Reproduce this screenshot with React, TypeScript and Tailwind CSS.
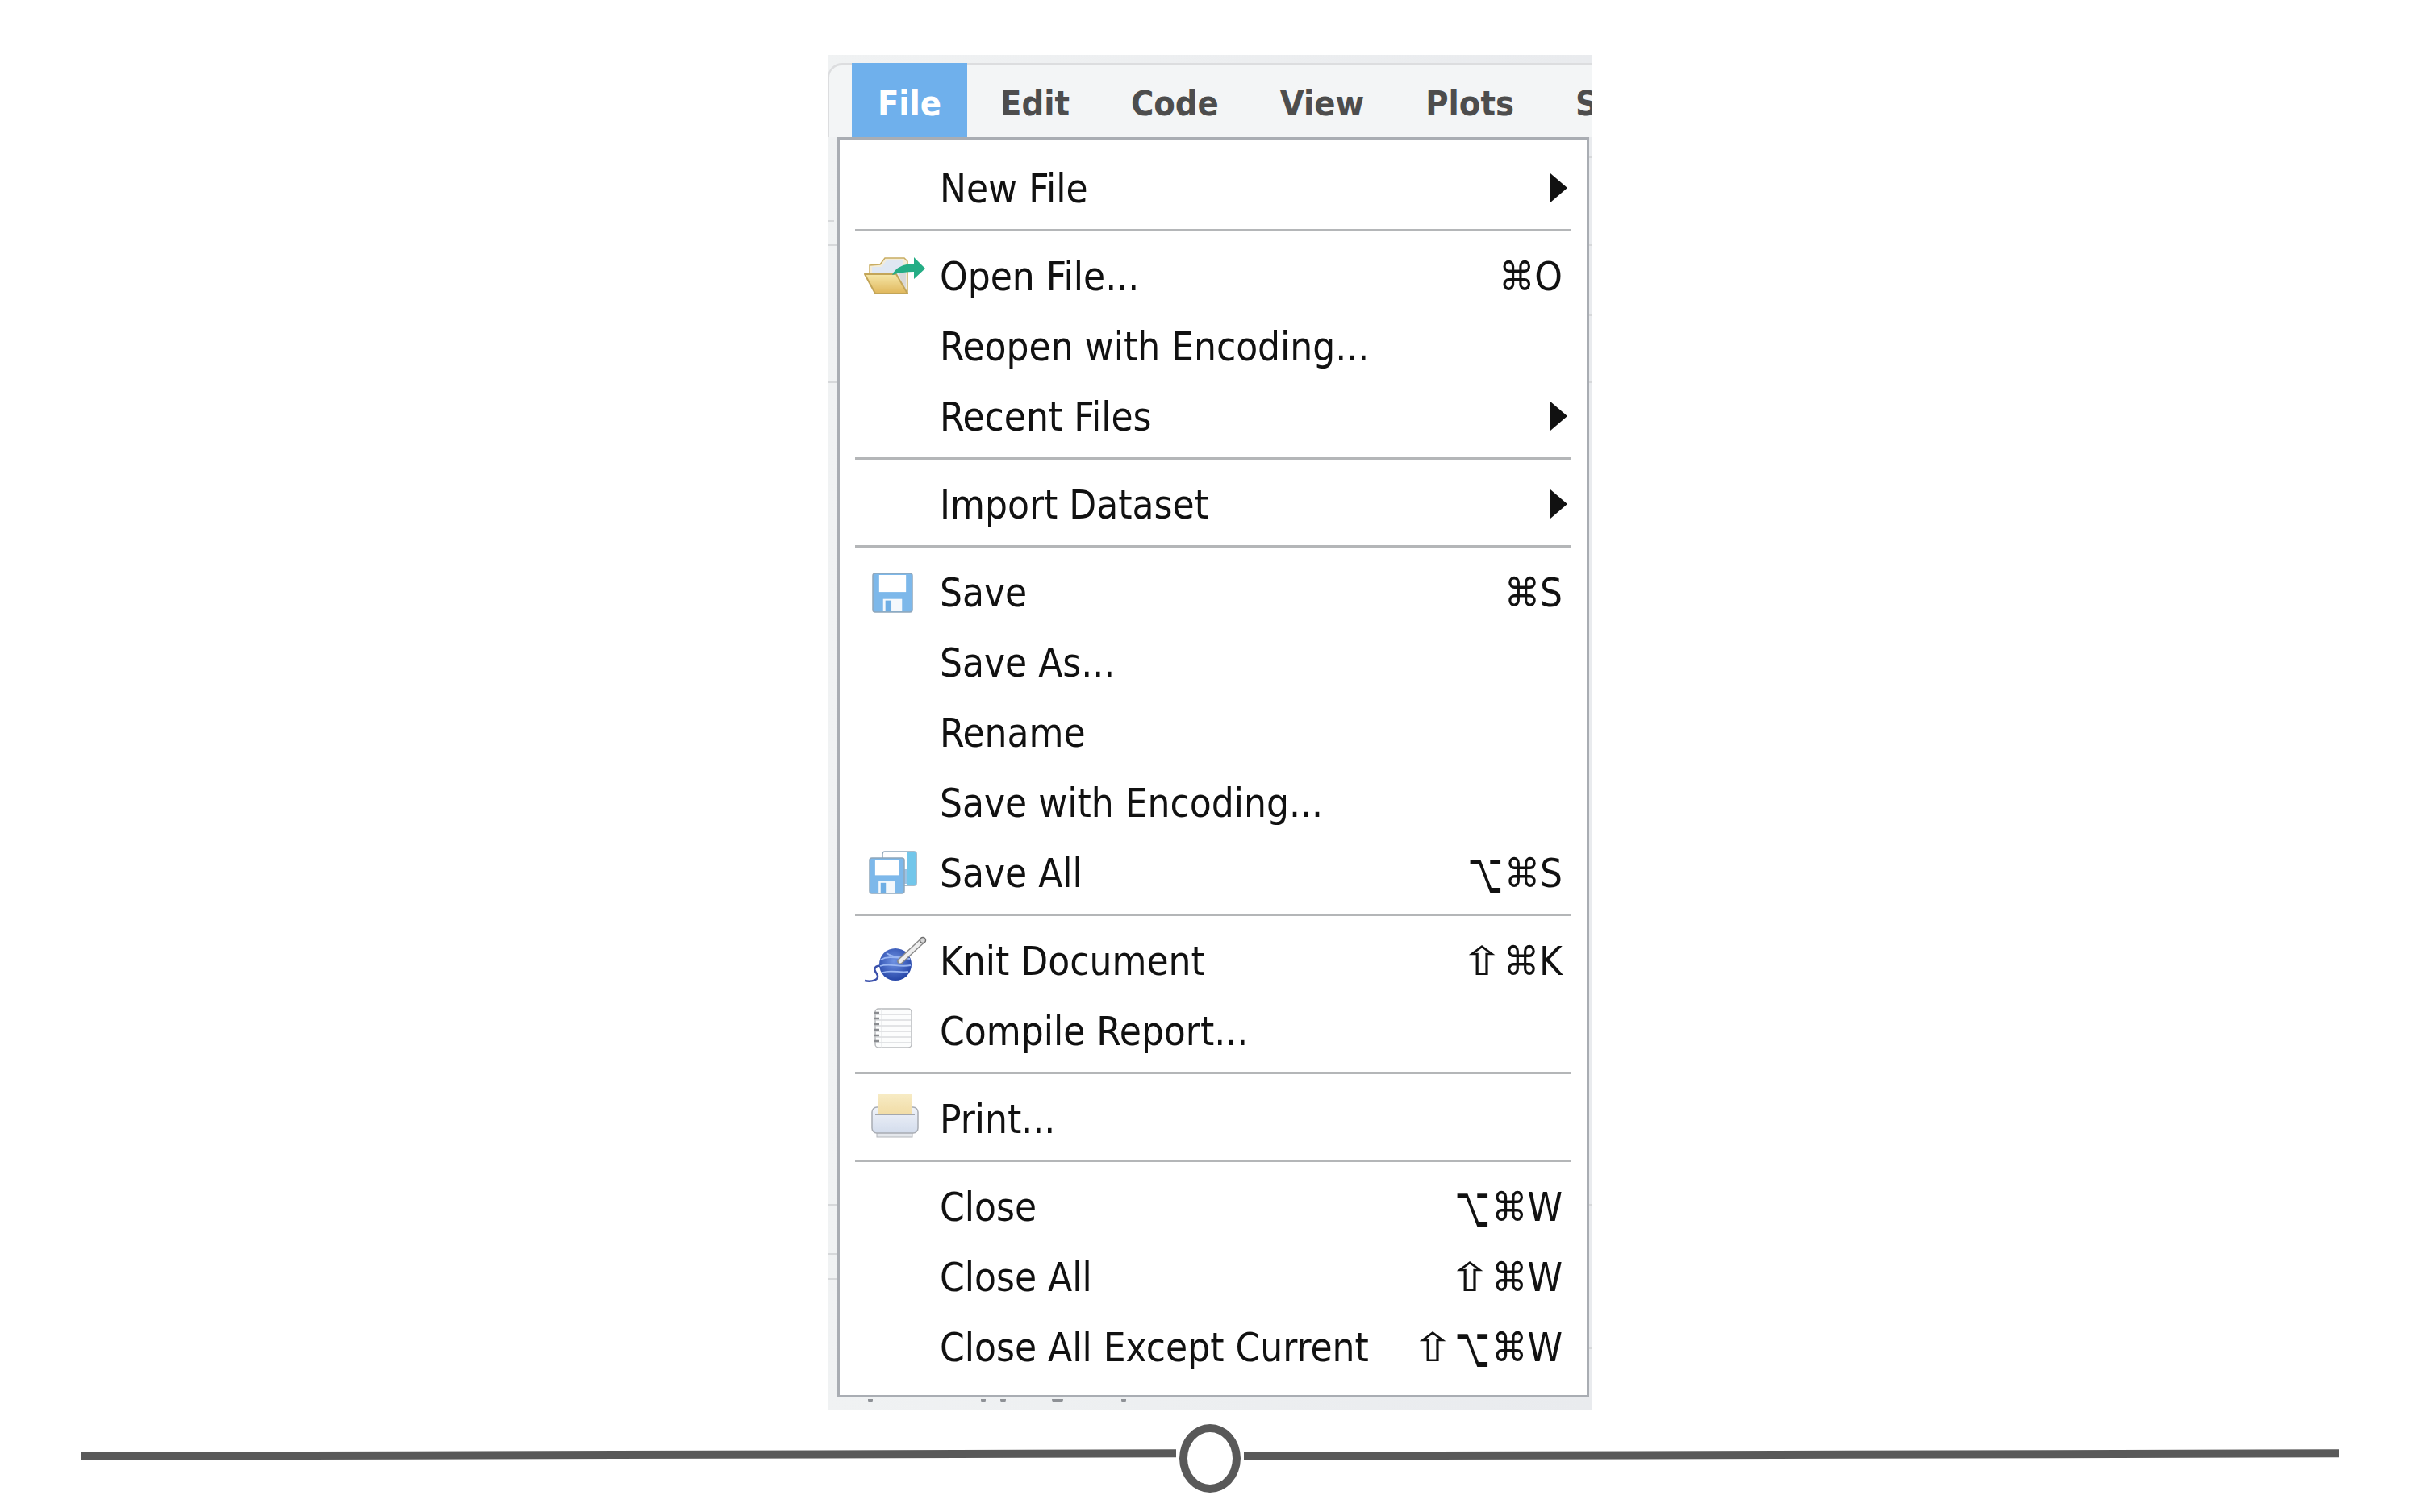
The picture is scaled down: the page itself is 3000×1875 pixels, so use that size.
const rowFont = { fontFamily: '"DejaVu Sans Condensed", "DejaVu Sans", sans-serif' };

type Item =
  | { kind: 'sep' }
  | { kind: 'row'; label: string; icon?: string; shortcut?: string; submenu?: boolean };

const items: Item[] = [
  { kind: 'row', label: 'New File', submenu: true },
  { kind: 'sep' },
  { kind: 'row', label: 'Open File...', icon: 'open', shortcut: '⌘O' },
  { kind: 'row', label: 'Reopen with Encoding...' },
  { kind: 'row', label: 'Recent Files', submenu: true },
  { kind: 'sep' },
  { kind: 'row', label: 'Import Dataset', submenu: true },
  { kind: 'sep' },
  { kind: 'row', label: 'Save', icon: 'save', shortcut: '⌘S' },
  { kind: 'row', label: 'Save As...' },
  { kind: 'row', label: 'Rename' },
  { kind: 'row', label: 'Save with Encoding...' },
  { kind: 'row', label: 'Save All', icon: 'saveAll', shortcut: '⌥⌘S' },
  { kind: 'sep' },
  { kind: 'row', label: 'Knit Document', icon: 'knit', shortcut: '⇧⌘K' },
  { kind: 'row', label: 'Compile Report...', icon: 'compile' },
  { kind: 'sep' },
  { kind: 'row', label: 'Print...', icon: 'print' },
  { kind: 'sep' },
  { kind: 'row', label: 'Close', shortcut: '⌥⌘W' },
  { kind: 'row', label: 'Close All', shortcut: '⇧⌘W' },
  { kind: 'row', label: 'Close All Except Current', shortcut: '⇧⌥⌘W' },
];

// bits of the window behind the menu that show either side of it
const ghostLines = [
  'left-0 top-[205px] w-[8px]',
  'left-0 top-[235px] w-[12px]',
  'left-0 top-[405px] w-[12px]',
  'left-0 top-[1425px] w-[12px]',
  'left-0 top-[1486px] w-[12px]',
  'left-0 top-[1517px] w-[12px]',
  'right-0 top-[126px] w-[4px]',
  'right-0 top-[235px] w-[4px]',
  'right-0 top-[322px] w-[4px]',
  'right-0 top-[405px] w-[4px]',
  'right-0 top-[1425px] w-[4px]',
  'right-0 top-[1603px] w-[4px]',
];

const bottomTicks = [
  'left-[50px] w-[6px]',
  'left-[190px] w-[6px]',
  'left-[214px] w-[7px]',
  'left-[278px] w-[14px]',
  'left-[364px] w-[6px]',
];

function Disk({ x, y, w, h }: { x: number; y: number; w: number; h: number }) {
  return (
    <g>
      <rect x={x} y={y} width={w} height={h} rx="3" fill="#7db8ea" stroke="#8fa6bb" strokeWidth="1.5" />
      <rect x={x + w * 0.16} y={y + 2} width={w * 0.68} height={h * 0.44} fill="#ffffff" />
      <rect x={x + w * 0.26} y={y + h * 0.66} width={w * 0.48} height={h * 0.34 - 1} fill="#f4f8fc" />
      <rect x={x + w * 0.32} y={y + h * 0.7} width={w * 0.15} height={h * 0.3 - 1} fill="#6faee4" />
    </g>
  );
}

function MenuIcon({ name }: { name: string }) {
  return (
    <svg width="90" height="66" viewBox="0 0 90 66">
      <defs>
        <linearGradient id="folderFill" x1="0" y1="0" x2="0" y2="1">
          <stop offset="0" stopColor="#f6e7a8" />
          <stop offset="1" stopColor="#e0b75c" />
        </linearGradient>
        <linearGradient id="paperFill" x1="0" y1="0" x2="0" y2="1">
          <stop offset="0" stopColor="#f7ebc4" />
          <stop offset="1" stopColor="#f1dca6" />
        </linearGradient>
        <linearGradient id="printerFill" x1="0" y1="0" x2="0" y2="1">
          <stop offset="0" stopColor="#f0f3f9" />
          <stop offset="1" stopColor="#d3dcec" />
        </linearGradient>
        <radialGradient id="ballFill" cx="0.45" cy="0.4" r="0.65">
          <stop offset="0" stopColor="#6f92e2" />
          <stop offset="1" stopColor="#1f3fa3" />
        </radialGradient>
      </defs>
      {name === 'open' && (
        <g>
          <path d="M19 30V19l13 -1 6 -8h24l4 4v40H52z" fill="#f3ecd8" stroke="#c9ad62" strokeWidth="1.5" />
          <path d="M22 28V21h12l6 -8h20v20z" fill="#dfe7f2" />
          <path d="M54 22h10v30h-3z" fill="#d9d9d9" />
          <path d="M13 30H52L66 54H26z" fill="url(#folderFill)" stroke="#c3a558" strokeWidth="2" strokeLinejoin="round" />
          <path d="M47 31c4 -9 14 -14 27 -14v-8l14 14 -14 13v-9c-9 0 -18 1 -27 4z" fill="#25ad85" />
        </g>
      )}
      {name === 'save' && <Disk x={23} y={9} w={49} h={48} />}
      {name === 'saveAll' && (
        <g>
          <rect x={35} y={6} width={42} height={42} rx="3" fill="#ffffff" stroke="#8fa6bb" strokeWidth="1.5" />
          <rect x={65} y={7} width={11} height={40} fill="#72c6ea" />
          <rect x={55} y={28} width={10} height={18} fill="#9cc3e4" />
          <Disk x={19} y={14} w={43} h={44} />
        </g>
      )}
      {name === 'knit' && (
        <g>
          <path d="M13 57c9 2 17 -1 16 -6 -1 -5 -6 -6 -3 -10 2 -3 7 -3 11 0" fill="none" stroke="#3a50ab" strokeWidth="2.5" />
          <circle cx="51" cy="37" r="20" fill="url(#ballFill)" />
          <path d="M33 31c9 -5 20 -2 36 -1M32 39c12 -4 24 2 38 -1M35 47c10 -4 22 1 32 -1M40 23c6 4 14 6 24 5" fill="none" stroke="#9ab6f2" strokeWidth="1.8" />
          <path d="M57 33L84 8" stroke="#8a8a8a" strokeWidth="7.5" strokeLinecap="round" />
          <path d="M57 33L84 8" stroke="#eeeeee" strokeWidth="4.5" strokeLinecap="round" />
          <circle cx="85" cy="7" r="3.5" fill="#d8d8d8" stroke="#6e6e6e" strokeWidth="1.5" />
        </g>
      )}
      {name === 'compile' && (
        <g>
          <rect x={26} y={5} width={45} height={48} rx="4" fill="#fcfdfd" stroke="#b8babd" strokeWidth="1.5" />
          <path d="M26 12H71M26 19H71M26 26H71M26 33H71M26 40H71M26 47H71" stroke="#c8cace" strokeWidth="1" />
          <path d="M34 5V53" stroke="#dfe1e3" strokeWidth="1" />
          <path d="M25 10h6M25 17h6M25 24h6M25 31h6M25 38h6M25 45h6" stroke="#8a8c90" strokeWidth="2.5" />
        </g>
      )}
      {name === 'print' && (
        <g>
          <rect x={28} y={49} width={44} height={6} fill="#e4e7ec" stroke="#b3b6bb" strokeWidth="1" />
          <rect x={22} y={18} width={57} height={32} rx="6" fill="url(#printerFill)" stroke="#a8acb3" strokeWidth="1.5" />
          <rect x={30} y={2} width={41} height={25} fill="url(#paperFill)" />
          <path d="M26 27H75" stroke="#8d9096" strokeWidth="1.5" />
        </g>
      )}
    </svg>
  );
}

// the modifier glyphs in DejaVu are narrower than the mac ones
function Shortcut({ keys }: { keys: string }) {
  return (
    <span className="whitespace-nowrap">
      {keys.split('').map((key, i) => {
        if (key === '⇧') return <span key={i} className="mx-[8px] inline-block scale-x-[1.5]">{key}</span>;
        if (key === '⌥') return <span key={i} className="-mx-[2px] inline-block scale-x-[0.85] scale-y-[1.45]">{key}</span>;
        return <span key={i}>{key}</span>;
      })}
    </span>
  );
}

function MenuRow({ label, icon, shortcut, submenu }: { label: string; icon?: string; shortcut?: string; submenu?: boolean }) {
  return (
    <div className="flex h-[87px] items-center pr-[30px] pt-[3px] text-[49px] leading-none text-[#111111]" style={rowFont}>
      <div className="flex w-[124px] shrink-0 items-center justify-center pl-[2px]">{icon && <MenuIcon name={icon} />}</div>
      <span className="flex-1 whitespace-nowrap">{label}</span>
      {shortcut && <Shortcut keys={shortcut} />}
      {submenu && (
        <svg width="21" height="36" viewBox="0 0 21 36" className="-mr-[6px] -mt-[3px]">
          <polygon points="0,0 21,18 0,36" fill="#111111" />
        </svg>
      )}
    </div>
  );
}

export default function App() {
  return (
    <div className="flex h-[1875px] w-[3000px] flex-col overflow-hidden bg-white pt-[68px]">
      {/* screenshot of the rstudio menu */}
      <div className="relative ml-[1026px] flex h-[1680px] w-[948px] flex-col bg-gradient-to-r from-[#f0f2f3] to-[#e9ebee] pt-[10px]">
        {ghostLines.map((line) => (
          <div key={line} className={`absolute h-[2px] bg-[#d6d8da] ${line}`} />
        ))}
        <div className="flex h-[92px] shrink-0 rounded-tl-[18px] border-t-[3px] border-l-[2px] border-[#dcdddf] bg-[#f3f5f6] pl-[28px] text-[43px] font-bold text-[#4d4d4d]" style={rowFont}>
          <div className="-mt-[3px] flex w-[143px] shrink-0 items-center justify-center bg-[#6fb0ec] pt-[9px] text-white">File</div>
          <div className="ml-[41px] flex items-center gap-[76px] overflow-hidden whitespace-nowrap pt-[5px]">
            <span>Edit</span>
            <span>Code</span>
            <span>View</span>
            <span>Plots</span>
            <span>S</span>
          </div>
        </div>
        <div className="relative z-10 ml-[12px] h-[1563px] w-[932px] border-[3px] border-[#a9adb3] bg-white pt-[16px]">
          {items.map((item, i) =>
            item.kind === 'sep' ? (
              <div key={i} className="mx-[19px] mb-[11px] mt-[8px] h-[3px] bg-[#b4b6b8]" />
            ) : (
              <MenuRow key={i} label={item.label} icon={item.icon} shortcut={item.shortcut} submenu={item.submenu} />
            ),
          )}
        </div>
        {bottomTicks.map((tick) => (
          <div key={tick} className={`absolute bottom-[9px] h-[4px] rounded-b-full bg-[#8e9196] ${tick}`} />
        ))}
      </div>
      {/* slider */}
      <div className="mt-[18px] flex h-[85px] gap-[4px] px-[101px]">
        <div className="mt-[33px] h-[10px] flex-1 -rotate-[0.14deg] bg-[#595959]" />
        <div className="h-[85px] w-[76px] shrink-0 rounded-[50%] border-[10px] border-[#595959]" />
        <div className="mt-[33px] h-[10px] flex-1 -rotate-[0.14deg] bg-[#595959]" />
      </div>
    </div>
  );
}
